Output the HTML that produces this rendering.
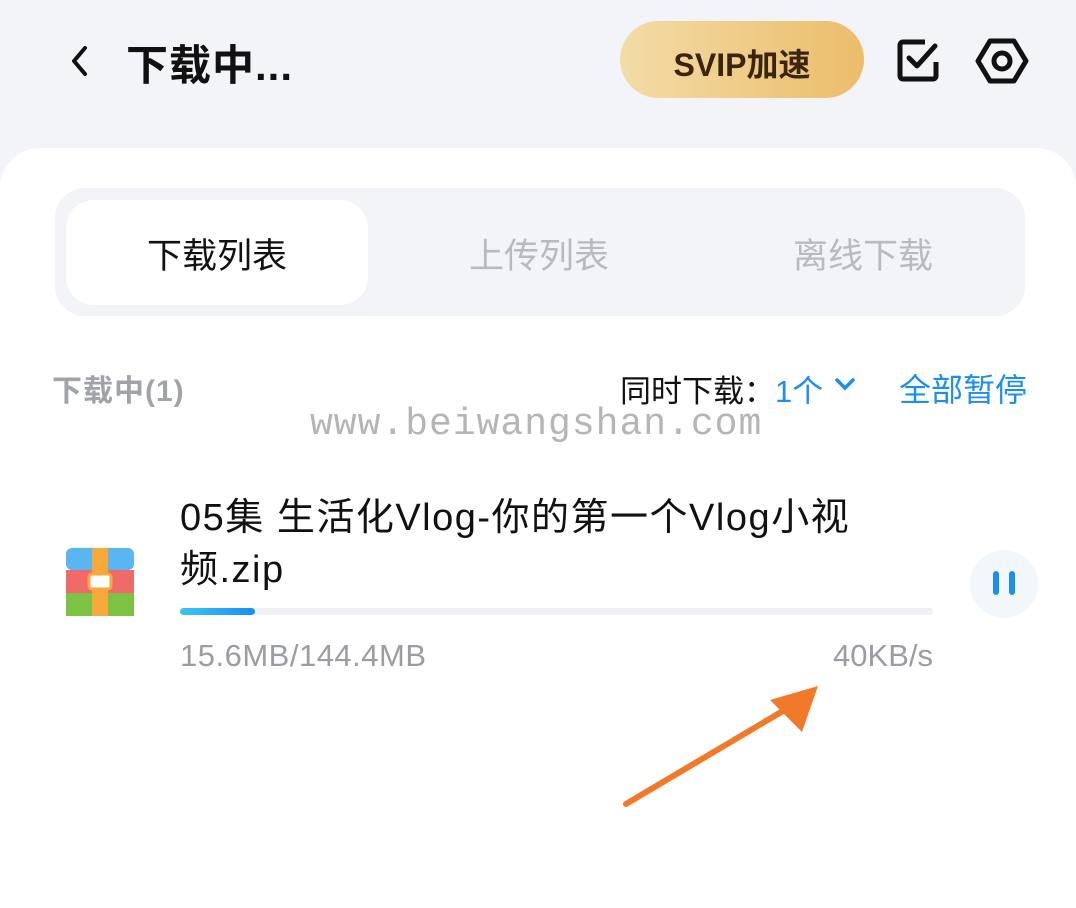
<!DOCTYPE html>
<html><head><meta charset="utf-8"><style>
body{margin:0;width:1076px;height:849px;background:#f3f4f8;font-family:"Liberation Sans","Noto Sans CJK SC",sans-serif;position:relative;overflow:hidden}
.a{position:absolute;white-space:nowrap}
</style></head><body>
<svg class="a" style="left:66px;top:44px" width="26" height="34"><path d="M19 4 L8 17 L19 30" stroke="#111" stroke-width="4" fill="none" stroke-linecap="round" stroke-linejoin="round"/></svg>
<div class="a" style="left:126px;top:32px;font-size:42px;font-weight:bold;color:#111;letter-spacing:1px">下载中...</div>
<div class="a" style="left:620px;top:21px;width:244px;height:77px;border-radius:39px;background:linear-gradient(90deg,#f3dca6,#ebbd6b);"></div>
<div class="a" style="left:620px;top:40px;width:244px;text-align:center;font-size:32px;font-weight:bold;color:#3a2510">SVIP加速</div>
<svg class="a" style="left:895px;top:36px" width="50" height="50"><path d="M30 6 H8 a3 3 0 0 0 -3 3 V40 a3 3 0 0 0 3 3 H38 a3 3 0 0 0 3 -3 V26" stroke="#111" stroke-width="5" fill="none" stroke-linejoin="round"/><path d="M14 22 L22 30 L40 10" stroke="#111" stroke-width="5" fill="none" stroke-linecap="round" stroke-linejoin="round"/></svg>
<svg class="a" style="left:975px;top:36px" width="54" height="50"><path d="M15 5 H39 L51 25 L39 45 H15 L3 25 Z" stroke="#111" stroke-width="5" fill="none" stroke-linejoin="round"/><circle cx="27" cy="25" r="8" stroke="#111" stroke-width="5" fill="none"/></svg>
<div class="a" style="left:0;top:148px;width:1076px;height:760px;background:#fff;border-radius:40px 40px 0 0"></div>
<div class="a" style="left:55px;top:188px;width:970px;height:128px;background:#f3f4f8;border-radius:30px"></div>
<div class="a" style="left:66px;top:200px;width:302px;height:105px;background:#fff;border-radius:28px"></div>
<div class="a" style="left:66px;top:228px;width:302px;text-align:center;font-size:35px;color:#111">下载列表</div>
<div class="a" style="left:388px;top:228px;width:302px;text-align:center;font-size:35px;color:#b8bac0">上传列表</div>
<div class="a" style="left:712px;top:228px;width:302px;text-align:center;font-size:35px;color:#b8bac0">离线下载</div>
<div class="a" style="left:52px;top:366px;font-size:30px;font-weight:bold;color:#a0a3a8;letter-spacing:1px">下载中(1)</div>
<div class="a" style="left:620px;top:366px;font-size:31px;color:#111">同时下载：<span style="color:#1a8ff0">1个</span></div>
<svg class="a" style="left:834px;top:376px" width="22" height="16"><path d="M3 4 L11 12 L19 4" stroke="#1a8ff0" stroke-width="3.5" fill="none" stroke-linecap="round"/></svg>
<div class="a" style="left:899px;top:365px;font-size:32px;color:#1a8ff0">全部暂停</div>
<div class="a" style="left:310px;top:403px;font-size:38px;color:#b5b5b5;font-family:'Liberation Mono',monospace;letter-spacing:1px">www.beiwangshan.com</div>
<svg class="a" style="left:66px;top:548px" width="68" height="68"><rect x="0" y="0" width="68" height="22" rx="6" fill="#5ab6f0"/><rect x="0" y="22" width="68" height="23" fill="#f06a6a"/><rect x="0" y="45" width="68" height="23" fill="#7cc243"/><rect x="26" y="0" width="16" height="68" fill="#f7a93c"/><rect x="23" y="26" width="22" height="15" rx="3" fill="#fff" stroke="#f7a93c" stroke-width="3"/></svg>
<div class="a" style="left:180px;top:492px;font-size:38px;color:#111;line-height:52px;letter-spacing:1.5px">05集 生活化Vlog-你的第一个Vlog小视<br>频.zip</div>
<div class="a" style="left:180px;top:608px;width:753px;height:7px;background:#f0f1f4;border-radius:4px"></div>
<div class="a" style="left:180px;top:608px;width:75px;height:7px;background:linear-gradient(90deg,#3cc4f2,#1a8ff0);border-radius:4px"></div>
<div class="a" style="left:180px;top:638px;font-size:31px;color:#9a9da2;letter-spacing:0.5px">15.6MB/144.4MB</div>
<div class="a" style="left:733px;top:638px;width:200px;text-align:right;font-size:31px;color:#9a9da2">40KB/s</div>
<div class="a" style="left:970px;top:550px;width:68px;height:68px;border-radius:50%;background:#f2f7fc"></div>
<div class="a" style="left:993px;top:571px;width:6px;height:24px;border-radius:3px;background:#1a8ff0"></div>
<div class="a" style="left:1009px;top:571px;width:6px;height:24px;border-radius:3px;background:#1a8ff0"></div>
<svg class="a" style="left:620px;top:680px" width="210" height="130"><path d="M6 124 L168 28" stroke="#f07a2a" stroke-width="6" stroke-linecap="round"/><path d="M150 20 L198 6 L182 52 Z" fill="#f07a2a"/></svg>
</body></html>
